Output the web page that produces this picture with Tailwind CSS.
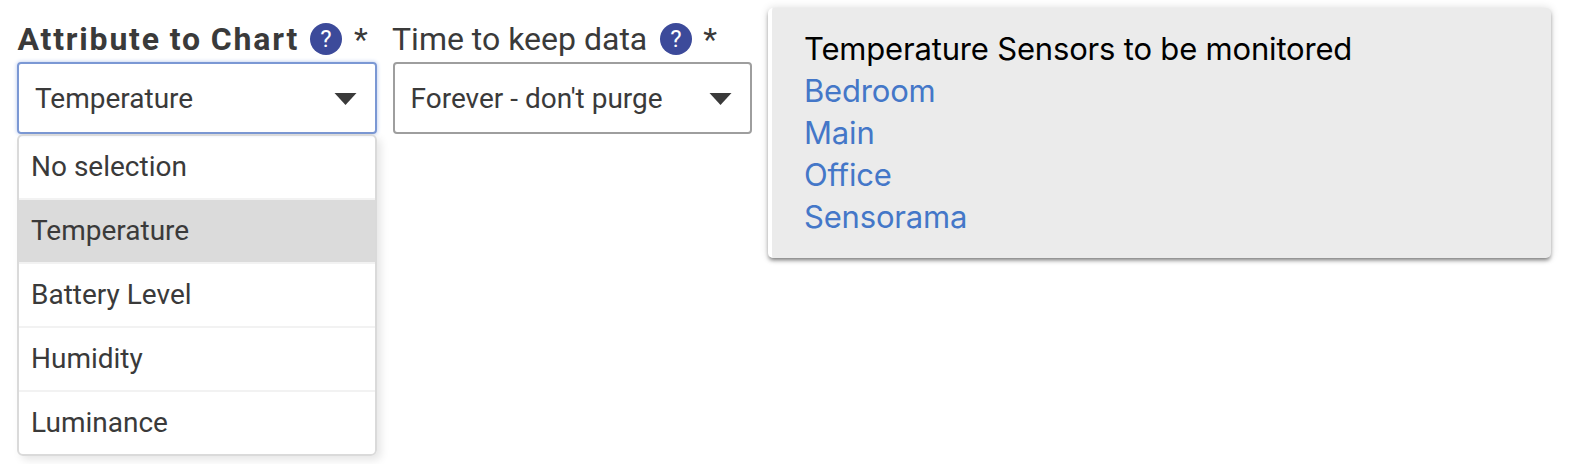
<!DOCTYPE html>
<html lang="en">
<head>
<meta charset="utf-8">
<title>Chart settings</title>
<script src="https://cdn.jsdelivr.net/npm/@tailwindcss/browser@4"></script>
</head>
<body class="h-[464px] overflow-hidden bg-white font-['Roboto',sans-serif] text-[#3a3a3a]">
<main class="flex items-start pl-[17px] pt-2">
  <section class="w-[360px] shrink-0">
    <div class="flex h-[54px] items-center pt-2 text-[32px] leading-[46px]">
      <span class="w-[282px] whitespace-nowrap pl-[0.5px] font-bold tracking-[1.8px] [word-spacing:-0.8px]">Attribute to Chart</span>
      <svg class="ml-[11px] size-8 shrink-0" viewBox="0 0 32 32"><circle cx="16" cy="16" r="16" fill="#3c4a9a"/><text x="16" y="24" text-anchor="middle" font-family="Roboto" font-size="24" fill="#fff">?</text></svg>
      <span class="ml-3">*</span>
    </div>
    <div class="flex h-[72px] items-center justify-between rounded-[4px] border-2 border-[#7b98d4] pl-4 pr-[18px] pt-[2px] text-[28px] shadow-[0_0_4px_#b4c5ec]">
      <span>Temperature</span>
      <svg class="h-3 w-6" viewBox="0 0 24 12"><path d="M1.5 0H23.5L12.5 12Z" fill="#3a3a3a"/></svg>
    </div>
    <ul class="h-[322px] overflow-visible rounded-[6px] border-2 border-[#dadada] text-[28px] leading-[62px] shadow-[4px_4px_8px_rgba(0,0,0,0.1)]">
      <li class="h-16 border-b-2 border-[#f2f2f2] pl-3">No selection</li>
      <li class="h-16 border-b-2 border-[#f2f2f2] bg-[#dbdbdb] bg-clip-padding pl-3">Temperature</li>
      <li class="h-16 border-b-2 border-[#f2f2f2] pl-3">Battery Level</li>
      <li class="h-16 border-b-2 border-[#f2f2f2] pl-3">Humidity</li>
      <li class="h-[62px] pl-3">Luminance</li>
    </ul>
  </section>
  <section class="ml-4 w-[359px] shrink-0">
    <div class="flex h-[54px] items-center pt-2 text-[32px] leading-[46px]">
      <span class="-ml-px whitespace-nowrap">Time to keep data</span>
      <svg class="ml-[13px] size-8 shrink-0" viewBox="0 0 32 32"><circle cx="16" cy="16" r="16" fill="#3c4a9a"/><text x="16" y="24" text-anchor="middle" font-family="Roboto" font-size="24" fill="#fff">?</text></svg>
      <span class="ml-[11px]">*</span>
    </div>
    <div class="flex h-[72px] items-center justify-between rounded-[4px] border-2 border-[#9e9e9e] pl-[15.5px] pr-[18px] pt-[2px] text-[28px]">
      <span>Forever - don't purge</span>
      <svg class="h-3 w-6" viewBox="0 0 24 12"><path d="M1.5 0H23.5L12.5 12Z" fill="#3a3a3a"/></svg>
    </div>
  </section>
  <section class="ml-4 h-[250px] w-[783px] shrink-0 rounded-[5px] border-l-4 border-white bg-[#ebebeb] pl-8 pt-5 font-['Inter',sans-serif] text-[31px] leading-[42px] tracking-[-0.18px] text-[#4477c8] shadow-[0_3px_4px_-1px_rgba(0,0,0,0.5),0_0_8px_rgba(0,0,0,0.14)]">
    <p class="text-black">Temperature Sensors to be monitored</p>
    <p>Bedroom</p>
    <p>Main</p>
    <p>Office</p>
    <p>Sensorama</p>
  </section>
</main>
</body>
</html>
